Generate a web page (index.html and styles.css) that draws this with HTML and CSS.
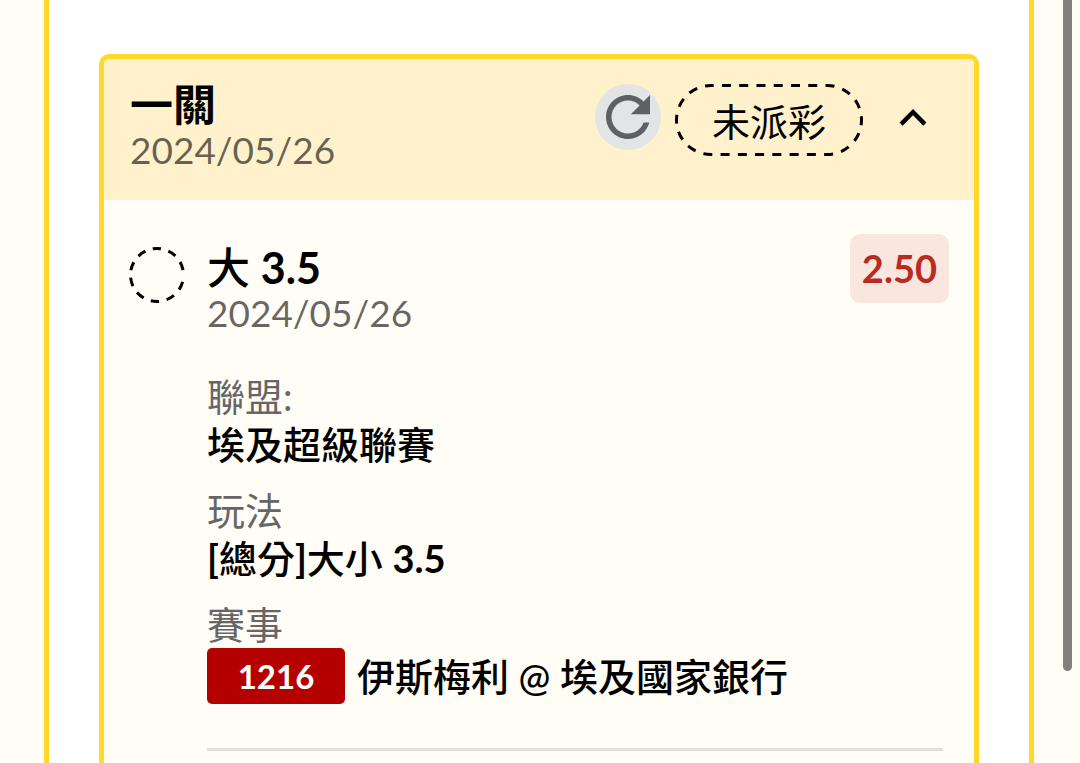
FILE: index.html
```html
<!DOCTYPE html>
<html lang="zh-Hant">
<head>
<meta charset="utf-8">
<meta name="viewport" content="width=device-width, initial-scale=1">
<title>一關</title>
<link rel="stylesheet" href="styles.css">
</head>
<body>
<main class="panel">
  <article class="card">
    <header class="card-header">
      <div class="heading">
        <h1 class="title title-main">一關</h1>
        <time class="date" datetime="2024-05-26">2024/05/26</time>
      </div>
      <div class="actions">
        <button class="refresh" type="button" aria-label="refresh">
          <svg viewBox="0 0 24 24" aria-hidden="true"><path d="M17.65 6.35C16.2 4.9 14.21 4 12 4c-4.42 0-7.99 3.58-7.99 8s3.57 8 7.99 8c3.73 0 6.84-2.55 7.73-6h-2.08c-.82 2.33-3.04 4-5.65 4-3.31 0-6-2.69-6-6s2.69-6 6-6c1.66 0 3.14.69 4.22 1.78L13 11h7V4l-2.35 2.35z"/></svg>
        </button>
        <div class="status">
          <svg class="status-outline" viewBox="0 0 188 72" aria-hidden="true"><rect x="1.5" y="1.5" width="185" height="69" rx="34.5" fill="none" stroke="#000" stroke-width="3" stroke-dasharray="9 8.26" stroke-dashoffset="6.3"/></svg>
          <span>未派彩</span>
        </div>
        <button class="toggle" type="button" aria-label="collapse" aria-expanded="true">
          <svg viewBox="0 0 24 24" aria-hidden="true"><path d="M12 8l-6 6 1.41 1.41L12 10.83l4.59 4.58L18 14z"/></svg>
        </button>
      </div>
    </header>
    <section class="bet">
      <svg class="marker" viewBox="0 0 56 56" aria-hidden="true"><circle cx="28" cy="28" r="26.5" fill="none" stroke="#000" stroke-width="3" stroke-dasharray="8.5 7.6" stroke-dashoffset="-7"/></svg>
      <div class="bet-body">
        <div class="bet-top">
          <div class="heading">
            <h2 class="title">大 <span class="num">3.5</span></h2>
            <time class="date" datetime="2024-05-26">2024/05/26</time>
          </div>
          <strong class="odds">2.50</strong>
        </div>
        <dl class="details">
          <div class="detail"><dt>聯盟:</dt><dd>埃及超級聯賽</dd></div>
          <div class="detail"><dt>玩法</dt><dd><span class="num">[</span>總分<span class="num">]</span>大小 <span class="num">3.5</span></dd></div>
          <div class="detail"><dt>賽事</dt><dd class="match"><span class="code">1216</span><span>伊斯梅利 @ 埃及國家銀行</span></dd></div>
        </dl>
        <hr class="divider">
      </div>
    </section>
  </article>
</main>
<div class="scroll-thumb"></div>
</body>
</html>
```
FILE: styles.css
```css
* { box-sizing: border-box; }
body, h1, h2, dl, dd { margin: 0; }
body {
  background: #fffdf5;
  color: #000;
  font-family: Lato, "Noto Sans CJK TC", sans-serif;
  font-size: 38px;
}
button { border: 0; padding: 0; background: none; cursor: pointer; }
svg { display: block; }

.panel {
  display: flex;
  flex-direction: column;
  min-height: 100vh;
  margin: 0 46px 0 44px;
  padding: 54px 50px 0;
  background: #fff;
  border: solid #ffd829;
  border-width: 0 5px;
}
.card {
  flex: 1;
  border: 5px solid #ffd829;
  border-bottom: 0;
  border-radius: 10px 10px 0 0;
  background: #fffdf5;
}
.card-header {
  display: flex;
  justify-content: space-between;
  align-items: flex-start;
  height: 141px;
  padding: 24px 34px 0 26px;
  background: #fef1cb;
  border-radius: 5px 5px 0 0;
}
.heading { display: flex; flex-direction: column; }
.title { font-size: 43px; font-weight: 500; line-height: 44px; }
.title-main { font-weight: 700; }
.num { font-weight: 700; }
.date { font-size: 37px; line-height: 46px; color: rgba(0, 0, 0, .6); }

.actions { display: flex; align-items: flex-start; padding-top: 1px; }
.refresh {
  width: 66px;
  height: 66px;
  border-radius: 50%;
  background: #e3e4e6;
}
.refresh svg { width: 66px; height: 66px; fill: #5f6062; }
.status {
  position: relative;
  width: 188px;
  height: 72px;
  margin-left: 14px;
  line-height: 74px;
  text-align: center;
}
.status-outline { position: absolute; inset: 0; }
.toggle { margin: 7px 0 0 23px; }
.toggle svg { width: 54px; height: 54px; }

.bet {
  display: flex;
  gap: 22px;
  padding: 34px 25px 0;
}
.marker { flex: none; width: 56px; height: 56px; margin-top: 13px; }
.bet-body { flex: 1; }
.bet-top { display: flex; justify-content: space-between; align-items: flex-start; }
.bet-top .heading { padding-top: 12px; }
.odds {
  padding: 0 12px;
  border-radius: 10px;
  background: #f8e6df;
  color: #b92a1f;
  font-size: 38px;
  font-weight: 700;
  line-height: 69px;
}
.details { display: grid; gap: 18px; margin-top: 36px; }
.detail dt { line-height: 48px; color: #666; }
.detail dd { line-height: 48px; font-weight: 500; }
.detail .match { display: flex; align-items: center; gap: 12px; line-height: 56px; }
.code {
  width: 138px;
  border-radius: 5px;
  background: #b50000;
  color: #fff;
  font-size: 33px;
  font-weight: 700;
  text-align: center;
}
.divider {
  height: 3px;
  margin: 44px 6px 0 0;
  border: 0;
  background: #e3e0da;
}
.scroll-thumb {
  position: fixed;
  top: -10px;
  right: 8px;
  width: 9px;
  height: 89.3vh;
  border-radius: 5px;
  background: #80807c;
}
```
